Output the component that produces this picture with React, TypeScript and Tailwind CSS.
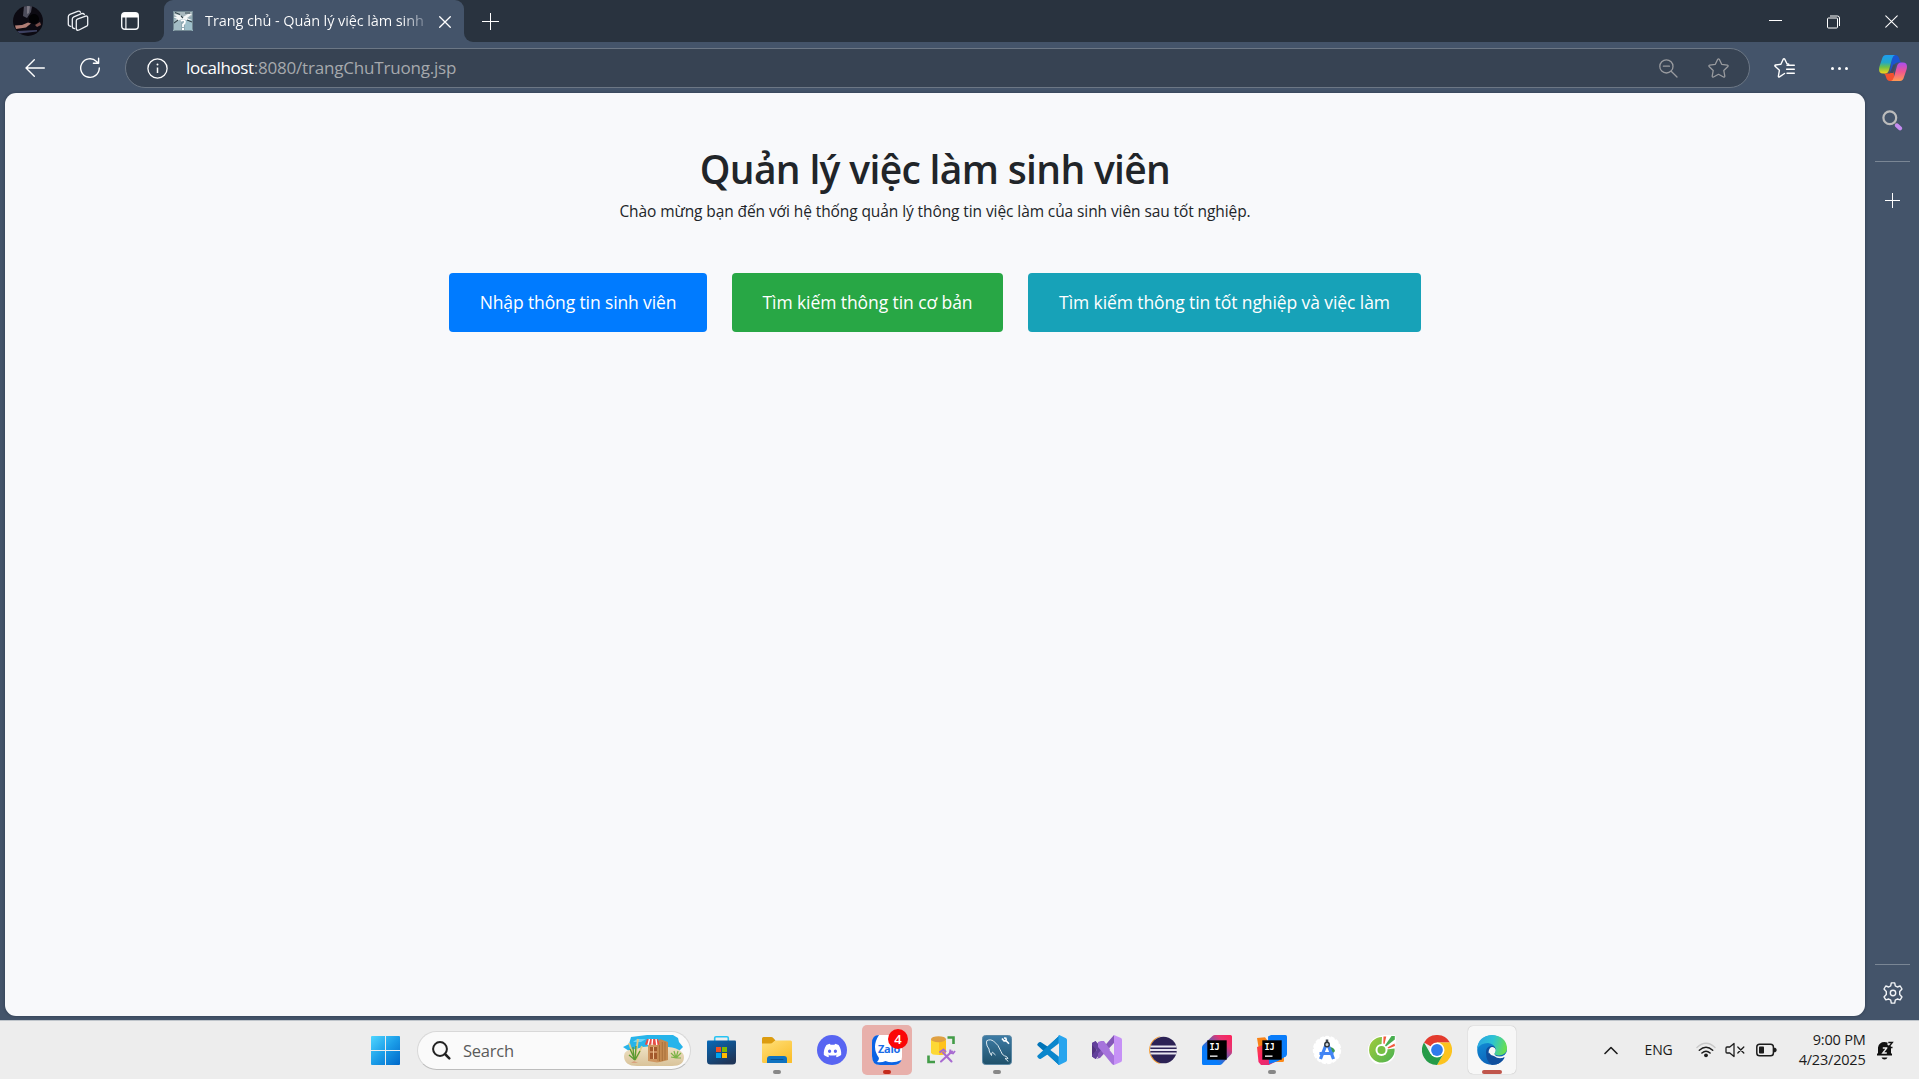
import React from "react";
import { FaDiscord } from "react-icons/fa";

const UI = "font-['Open_Sans','Noto_Sans',sans-serif]";

/* ---------- browser chrome icons ---------- */

function Avatar() {
  return (
    <svg width="30" height="30" viewBox="0 0 30 30">
      <defs>
        <clipPath id="av"><circle cx="15" cy="15" r="15" /></clipPath>
        <filter id="avs" x="-10%" y="-10%" width="120%" height="120%"><feGaussianBlur stdDeviation=".7" /></filter>
      </defs>
      <g clipPath="url(#av)">
        <rect width="30" height="30" fill="#0c0a12" />
        <g filter="url(#avs)">
          <path d="M11 0h8l-1 6-4 6-4-2z" fill="#4e4e5c" />
          <path d="M14 0h3l-1 7-2 1z" fill="#7b7984" />
          <path d="M2 19.500l7-.5 6-2.500 3 1-5 4-10 1.500z" fill="#b07d74" />
          <path d="M22 19l5-3 1 3-4 2z" fill="#7b504c" />
          <path d="M4 25l20-1v1.500l-18 2z" fill="#3c4060" />
        </g>
        <circle cx="21" cy="13" r="5" fill="#020204" />
      </g>
    </svg>
  );
}

function WorkspacesIcon() {
  return (
    <svg width="22" height="22" viewBox="0 0 22 22" fill="none" stroke="#eef1f5" strokeWidth="1.3" strokeLinejoin="round" strokeLinecap="round">
      <path d="M10.3 9.2 18.6 6.1Q20.7 5.6 20.7 7.5V14.4Q20.7 15.6 19.6 16.2L12 20Q9.4 20.9 9.3 18.6V10.8Q9.3 9.7 10.3 9.2Z" />
      <path d="M7.7 18.7Q5.3 18.6 5.3 16.6V9Q5.3 7.5 6.8 6.8L14.6 3.7Q16.7 3.1 17.3 4.6" />
      <path d="M3.7 16.3Q1.3 16 1.3 14V6.800Q1.300 5 2.900 4.300L10.600 1.300Q12.700 .8 13.500 2.200" />
    </svg>
  );
}

function TabActionsIcon() {
  return (
    <svg width="18" height="18" viewBox="0 0 18 18" fill="none">
      <rect x=".7" y=".7" width="16.600" height="16.600" rx="3" stroke="#f5f7f9" strokeWidth="1.400" />
      <path d="M1 5.500V3Q1 1 3 1h12q2 0 2 2v2.500z" fill="#fff" />
      <path d="M4.900 5v12" stroke="#f5f7f9" strokeWidth="1.200" />
    </svg>
  );
}

function Favicon() {
  return (
    <svg width="20" height="20" viewBox="0 0 20 20">
      <rect width="20" height="20" rx="1" fill="#8fa9b3" />
      <rect y="8" width="8" height="12" fill="#a3bcc4" />
      <rect x="12" y="9" width="8" height="11" fill="#9fc0cb" />
      <path d="M1 1h18v4l-6 3H7L1 6z" fill="#a9b9be" />
      <path d="M1 3l5 1 4 2 5-3 4 0-5 4 5 2-6 0-3-1-4 1-5 3 3-4-4-2 4 0z" fill="#f4f7f7" />
      <path d="M2 1.500l5 2M12 2l5 0M5 9l-4 3M14 9l5 2M8 5l2 2" stroke="#34454c" strokeWidth="1.100" />
      <path d="M8 10q3-2 4 .5 0 2-2 3v2.500" stroke="#fff" strokeWidth="1.800" fill="none" />
      <rect x="9" y="17" width="2" height="2" fill="#fff" />
      <rect x=".5" y=".5" width="19" height="19" rx="1" fill="none" stroke="#728892" />
    </svg>
  );
}

function Cross({ size, width }: { size: number; width: number }) {
  return (
    <svg width={size} height={size} viewBox="0 0 12 12" stroke="#fff" strokeWidth={width} strokeLinecap="round">
      <path d="M.7.7l10.600 10.600M11.300.7L.7 11.300" />
    </svg>
  );
}

function Plus({ size }: { size: number }) {
  const c = size / 2;
  return (
    <svg width={size} height={size} stroke="#fff" strokeWidth="1">
      <path d={`M${c} 0V${size}M0 ${c}H${size}`} />
    </svg>
  );
}

function BackIcon() {
  return (
    <svg width="20" height="18" viewBox="0 0 20 18" fill="none" stroke="#fff" strokeWidth="1.400" strokeLinecap="round" strokeLinejoin="round">
      <path d="M9.300.8L1 9l8.300 8.200M1 9h18.300" />
    </svg>
  );
}

function ReloadIcon() {
  return (
    <svg width="22" height="22" viewBox="0 0 22 22" fill="none" stroke="#fff" strokeWidth="1.400" strokeLinecap="round" strokeLinejoin="round">
      <path d="M20.300 11a9.300 9.300 0 1 1-2.800-6.600l1.600 1.700M19.600 1.300v5h-5.200" />
    </svg>
  );
}

function InfoIcon() {
  return (
    <svg width="21" height="21" viewBox="0 0 21 21" fill="none" stroke="#fff" strokeWidth="1.300">
      <circle cx="10.500" cy="10.500" r="9.600" />
      <path d="M10.500 9.500v5.500" strokeWidth="1.500" />
      <circle cx="10.500" cy="6.600" r="1" fill="#fff" stroke="none" />
    </svg>
  );
}

function ZoomOutIcon() {
  return (
    <svg width="19" height="19" viewBox="0 0 19 19" fill="none" stroke="#999b9f" strokeWidth="1.300" strokeLinecap="round">
      <circle cx="7.400" cy="7.400" r="6.600" />
      <path d="M12.200 12.200L18 18M4.400 7.200h6" />
    </svg>
  );
}

function StarIcon() {
  return (
    <svg width="21" height="20" viewBox="0 0 21 20" fill="none" stroke="#999b9f" strokeWidth="1.300" strokeLinejoin="round">
      <path d="M9.700 1.300q.8-1 1.600 0l2.400 5 5.700.8q1.200.4.500 1.400l-4.100 4 1 5.700q-.1 1.300-1.300.8L10.500 16.300 5.500 19q-1.200.5-1.300-.8l1-5.700-4.100-4q-.7-1 .5-1.400l5.700-.8z" />
    </svg>
  );
}

function FavoritesIcon() {
  return (
    <svg width="21" height="20" viewBox="0 0 21 20" fill="none" stroke="#fff" strokeWidth="1.400" strokeLinejoin="round" strokeLinecap="round">
      <path d="M10.500 15.500L5.500 18.800q-1.200.5-1.100-.8l1-5.700-4.300-4q-.7-1 .5-1.300l5.300-.8 2.300-5q.8-1 1.600 0l2.200 4.600 1.800.4" />
      <path d="M13 7.200h7.300M12.600 11.200h7.700M13 15.200h7.300" />
    </svg>
  );
}

function CopilotIcon() {
  return (
    <svg width="28" height="26" viewBox="0 0 28 26">
      <defs>
        <linearGradient id="cp1" x1="0" y1="0" x2="0" y2="1">
          <stop offset="0" stopColor="#1e9cf0" /><stop offset=".4" stopColor="#22a7c9" /><stop offset=".65" stopColor="#6cc04a" /><stop offset="1" stopColor="#f7d219" />
        </linearGradient>
        <linearGradient id="cp2" x1="0" y1="0" x2="0" y2="1">
          <stop offset="0" stopColor="#a94df0" /><stop offset=".5" stopColor="#f0568f" /><stop offset="1" stopColor="#ff9a52" />
        </linearGradient>
      </defs>
      <path d="M13 0h3q3 0 4 3l1 3q.6 1.500 3 1.500h-5q-3 0-4 3l-4 6z" fill="#1b55d0" />
      <path d="M6 18.500h5l3-4 2 10.500q-2 1.500-5 1-3 0-4-4-.5-2.500-2-3.500z" fill="#f4512e" />
      <path d="M7 0h9q-2 .6-3 4l-3 11q-1 3.500-4 3.500H4Q-1 18.500.3 12L3 4Q4 0 7 0z" fill="url(#cp1)" />
      <path d="M21 26h-9q2-.6 3-4l3-11q1-3.500 4-3.500h2q5 0 3.700 6.500L25 22q-1 4-4 4z" fill="url(#cp2)" />
      <path d="M14.200 9.500h2.600l-2.600 8.500h-3.200z" fill="#3f4a63" />
    </svg>
  );
}

function SideSearchIcon() {
  return (
    <svg width="21" height="21" viewBox="0 0 21 21" fill="none">
      <path d="M12.500 12.500l3 3" stroke="#777" strokeWidth="2" />
      <circle cx="7.800" cy="7.800" r="6.400" stroke="#bcbcbc" strokeWidth="2.200" />
      <path d="M15 15.500l3 2.800" stroke="#c58bf0" strokeWidth="4.200" strokeLinecap="round" />
    </svg>
  );
}

function GearIcon() {
  return (
    <svg width="22" height="22" viewBox="0 0 22 22" fill="none" stroke="#f1f3f6" strokeWidth="1.400" strokeLinejoin="round">
      <path d="M9.300.9h3.400l.6 3 2 1.100 2.900-1 1.800 3-2.300 2.500v3l2.300 2.400-1.800 3-2.900-.9-2 1.100-.6 3H9.300l-.6-3-2-1.100-2.900.9-1.800-3 2.300-2.400v-3L2 7l1.800-3 2.900 1 2-1.100z" />
      <circle cx="11" cy="11" r="2.700" />
    </svg>
  );
}

/* ---------- taskbar icons ---------- */

function WindowsIcon() {
  return (
    <svg width="29" height="29" viewBox="0 0 29 29">
      <defs>
        <linearGradient id="win" gradientUnits="userSpaceOnUse" x1="0" y1="0" x2="29" y2="29">
          <stop offset="0" stopColor="#4fd6ff" /><stop offset=".5" stopColor="#1b9de8" /><stop offset="1" stopColor="#0067c8" />
        </linearGradient>
      </defs>
      <path fill="url(#win)" d="M1 0h13v14H0V1q0-1 1-1zM15 0h13q1 0 1 1v13H15zM0 15h14v14H1q-1 0-1-1zM15 15h14v13q0 1-1 1H15z" />
    </svg>
  );
}

function SearchIcon() {
  return (
    <svg width="19" height="19" viewBox="0 0 19 19" fill="none" stroke="#222" strokeWidth="2" strokeLinecap="round">
      <circle cx="8" cy="8" r="6.900" />
      <path d="M13 13l4.300 4.300" strokeWidth="2.500" />
    </svg>
  );
}

function BeachPicture() {
  return (
    <svg width="61" height="33" viewBox="0 0 61 33">
      <defs>
        <linearGradient id="sand" x1="0" y1="0" x2="0" y2="1">
          <stop offset="0" stopColor="#efe2c4" /><stop offset="1" stopColor="#d9c39a" />
        </linearGradient>
      </defs>
      <path d="M8 3L24 1 50 1 55 4 56 8 60 13 56 17H6L0 13 6 10z" fill="#27b4ea" />
      <path d="M14 5h9l-5 3h-8z" fill="#6fd4f5" />
      <path d="M1 22q0-7 12-7 10-4 22-2 14-1 21 3 5 3 5 7 0 9-12 9H14Q1 32 1 22z" fill="url(#sand)" />
      <path d="M25 10h10l2-4v22l-3 .5-9-1.500z" fill="#cf9660" />
      <path d="M34 9l3-4 8 3v18l-8 2-3-1z" fill="#c48a50" />
      <path d="M36.500 11v16M39.300 8v19M42 8v18" stroke="#9c6430" strokeWidth=".7" />
      <rect x="27" y="13" width="7" height="12" fill="#a3592c" />
      <path d="M30.500 13v12M27 18h7" stroke="#f0c391" strokeWidth="1" />
      <path d="M24 5h11l1.500 5q-1.500 2-3 0-1.500 2-3 0-1.500 2-3 0-1.500 2-3 0-1.500 2-2.500 0z" fill="#e84b45" />
      <path d="M26.500 5l-1.500 6M29.500 5l-.5 6M33 5l.8 6" stroke="#fff" strokeWidth="1.400" />
      <path d="M12 26L15 5M12 26l-6-17M13 26l6-14" stroke="#e0ca86" strokeWidth="1.800" />
      <path d="M12 26l-5-11M12 26l1-14M12 26l5-9M12 26l-6-5M11 26l-1-13" stroke="#5b9a31" strokeWidth="1.300" />
      <path d="M53 24l-5-5M53 24l-2-7M53 24l2-7M53 24l5-5M53 24l-5-1M53 24h5" stroke="#7bb346" strokeWidth="1.200" />
      <path d="M8 29l3-2 4 2z" fill="#d9a27e" />
    </svg>
  );
}

function StoreIcon() {
  return (
    <svg width="30" height="30" viewBox="0 0 30 30">
      <defs>
        <linearGradient id="st" x1="0" y1="0" x2=".6" y2="1">
          <stop offset="0" stopColor="#0669b8" /><stop offset="1" stopColor="#1f3659" />
        </linearGradient>
      </defs>
      <path d="M7.700 6V3q0-1.300 1.300-1.300h11q1.300 0 1.300 1.300v3" fill="none" stroke="#27c3f3" strokeWidth="1.600" />
      <path d="M1 5.500h27q1 0 1 1V26q0 3.500-3.500 3.500h-22Q0 29.500 0 26V6.500q0-1 1-1z" fill="url(#st)" />
      <rect x="9" y="12" width="5" height="5" fill="#f25022" />
      <rect x="15" y="12" width="5" height="5" fill="#7fba00" />
      <rect x="9" y="18" width="5" height="5" fill="#00a4ef" />
      <rect x="15" y="18" width="5" height="5" fill="#ffb900" />
    </svg>
  );
}

function ExplorerIcon() {
  return (
    <svg width="30" height="30" viewBox="0 0 30 30">
      <defs>
        <linearGradient id="fo" x1="0" y1="0" x2=".7" y2="1">
          <stop offset="0" stopColor="#ffe07a" /><stop offset="1" stopColor="#fbbf2d" />
        </linearGradient>
      </defs>
      <path d="M0 3.500Q0 2 1.500 2H9q1.500 0 2.500 1.200L13.500 5.500 10 9H0z" fill="#dc9c10" />
      <path d="M0 8.500h8q2 0 3-1.200 1.300-1.800 3-1.800h14.500q1.500 0 1.500 1.500v20.500q0 .5-.5.5H1.500Q0 28 0 26.500z" fill="url(#fo)" />
      <path d="M5 28v-4q0-3 3-3h14q3 0 3 3v4z" fill="#0f72c0" />
      <path d="M9 24.500h12" stroke="#0b5190" strokeWidth="1.200" strokeLinecap="round" />
    </svg>
  );
}

function DiscordIcon() {
  return (
    <span className="flex size-[30px] items-center justify-center rounded-full bg-[#5865f2]">
      <FaDiscord size={19} color="#fff" />
    </span>
  );
}

function ZaloIcon() {
  return (
    <span className="relative block size-[30px]">
      <svg width="30" height="30" viewBox="0 0 30 30">
        <rect width="30" height="30" rx="8" fill="#fff" />
        <path d="M7 0Q0 0 0 8v13q0 9 8 9h13q7 0 8.500-5-9 4-16 1-4 2-8.500 1 2-1.500 2-4Q-1 12 7 0z" fill="#0b63e5" />
      </svg>
      <span className="absolute left-[6px] top-[7px] font-['Open_Sans',sans-serif] text-[11px] leading-[14px] font-bold tracking-[-0.3px] text-[#1a6ce8]">Zalo</span>
      <span className="absolute left-[16px] top-[-6px] flex size-5 items-center justify-center rounded-full bg-[#fb0606] font-['Open_Sans',sans-serif] text-[13px] leading-none font-semibold text-white">4</span>
    </span>
  );
}

function SqlToolsIcon() {
  return (
    <svg width="30" height="30" viewBox="0 0 30 30" fill="none">
      <path d="M20.500 2.500h6V9M1.500 20.500v6.500H8" stroke="#439c48" strokeWidth="2.600" />
      <path d="M4 4.500v13q0 2.500 7.500 2.500t7.500-2.500v-13z" fill="#fdd835" />
      <path d="M12 6h7v11q0 2-5 3h-2z" fill="#ffc21c" />
      <ellipse cx="11.500" cy="4.200" rx="7.500" ry="3" fill="#dfa042" />
      <path d="M14 26.500l11-10M24.500 26.500l-8.500-9" stroke="#a86bd1" strokeWidth="2.100" strokeLinecap="round" />
      <path d="M12.500 17.500l4-3 2.500 2.500M23.500 14.500l-.5 3 3 1 2-2.500" stroke="#a86bd1" strokeWidth="1.900" />
    </svg>
  );
}

function MySqlIcon() {
  return (
    <svg width="30" height="30" viewBox="0 0 30 30" fill="none">
      <defs>
        <linearGradient id="my" x1="0" y1="0" x2="0" y2="1">
          <stop offset="0" stopColor="#3e7ca6" /><stop offset="1" stopColor="#1f5069" />
        </linearGradient>
      </defs>
      <rect x=".5" y=".5" width="29" height="29" rx="3" fill="url(#my)" stroke="#5c88a4" />
      <path d="M9.500 20.500L8 18Q7 16 7 14 4.500 11 4.500 8 4 5 6.500 5q2-.8 5 1Q16.500 9.500 19 16.500q1 3.500 3.500 4.300 2.500.2 3.500 2.700-2-.5-3 0 2 1 3 3M9.500 20.500q0-3 1-3.300l3 2.800" stroke="#dbe8ef" strokeWidth="1" strokeLinejoin="round" />
      <path d="M20 3.500l2 2.500 2-.3 3 3M22 3l1.800.3.500 2" stroke="#fff" strokeWidth="1.600" />
    </svg>
  );
}

function VsCodeIcon() {
  return (
    <svg width="30" height="30" viewBox="0 0 30 30">
      <path d="M22 1L10.500 11.500 3.600 6.900 2 7.300.4 9Q0 9.800.6 10.500L22 30z" fill="#0074b8" />
      <path d="M22 30L10.500 19.500 3.600 24.100 2 23.700.4 22q-.4-.8.200-1.500L22 1z" fill="#0a86cc" />
      <path d="M22.300 0L29 3.200q1 .6 1 1.800v20q0 1.200-1 1.800L22.300 30q-1 0-.8-1V1q-.2-1 .8-1z" fill="#28a5ee" />
      <path d="M22 8.200L13.300 15 22 21.800z" fill="#ededed" />
    </svg>
  );
}

function VisualStudioIcon() {
  return (
    <svg width="30" height="30" viewBox="0 0 30 30">
      <path d="M0 8l4-1.800V24L0 21.500z" fill="#52327f" />
      <path d="M0 8l3.500-2L12 15l-8.500 9L0 21.500V20l4.500-5L0 10z" fill="#62409b" />
      <path d="M22 0L6 18.500v4L3.500 24 8 23 22 8z" fill="#8356b8" />
      <path d="M9 6h3l10 14v10q-1 0-2-1L6 12V7z" fill="#a673dc" />
      <path d="M22 0l7 3q1 .5 1 2v20q0 1.500-1 2l-7 3z" fill="#c691f6" />
      <path d="M22 9.500v11L17.500 15z" fill="#ededed" />
    </svg>
  );
}

function EclipseIcon() {
  return (
    <svg width="30" height="30" viewBox="0 0 30 30">
      <path d="M14 1A14.200 14.200 0 0 0 14 29Q3 24 3 15T14 1z" fill="#f7941e" />
      <circle cx="16.500" cy="15" r="13.300" fill="#2c2255" />
      <path d="M3.400 11.500h26.200M3 15h27M3.400 18.500h26.200" stroke="#e8e6f0" strokeWidth="1.800" />
    </svg>
  );
}

function IntellijIcon({ alt = false }: { alt?: boolean }) {
  return (
    <svg width="30" height="30" viewBox="0 0 30 30">
      <defs>
        <linearGradient id="ij" x1="1" y1="0" x2="0" y2="1">
          <stop offset="0" stopColor="#ff2259" /><stop offset=".25" stopColor="#e63573" /><stop offset=".5" stopColor="#5560b4" /><stop offset=".7" stopColor="#087cfa" />
        </linearGradient>
        <linearGradient id="ij2" x1="0" y1="0" x2=".6" y2="1">
          <stop offset="0" stopColor="#fb4a35" /><stop offset=".5" stopColor="#ff2464" /><stop offset="1" stopColor="#e02d74" />
        </linearGradient>
      </defs>
      {alt ? (
        <>
          <path d="M0 3l8-.8 3 4V27H4z" fill="#f88216" />
          <path d="M20 20h7v5.500q0 1.500-1.500 1.500H17z" fill="#fc8a1a" />
          <path d="M0 12l6-2 14 16-8 4H4L1.500 27z" fill="url(#ij2)" />
          <path d="M11 1.500L14 0h14.500Q30 0 30 1.500V19q0 1.500-1 2.200L21 26l-9 3z" fill="#0a7dfa" />
        </>
      ) : (
        <path d="M10.500 1Q11.500 0 13 0h15.500Q30 0 30 1.500V17q0 1.500-1 2.500L20 29q-1 1-2.500 1h-16Q0 30 0 28.500V12.500Q0 11 1 10z" fill="url(#ij)" />
      )}
      <rect x="5.300" y="5.300" width="19.400" height="19.400" fill="#000" />
      <text x="7.500" y="15" fill="#fff" fontFamily="DejaVu Sans Mono" fontWeight="bold" fontSize="8.500">IJ</text>
      <rect x="8" y="20.500" width="7.500" height="1.300" fill="#fff" />
    </svg>
  );
}

function AndroidStudioIcon() {
  return (
    <svg width="30" height="30" viewBox="0 0 30 30" fill="none">
      <circle cx="15" cy="15" r="13.300" fill="#fff" stroke="#fff" strokeWidth="1.800" strokeDasharray="4 1.500" />
      <path d="M17 12q5 0 6 4-1 2-3 2z" fill="#3d9950" />
      <path d="M14.500 8.500L8.500 24M15.500 8.500l6 15.500M7.500 18.500h14" stroke="#4285f4" strokeWidth="3.200" />
      <path d="M15 4.500v4" stroke="#444b52" strokeWidth="2.500" />
      <circle cx="15" cy="9.500" r="2.200" fill="#cfd6dc" stroke="#30363b" strokeWidth="1.400" />
    </svg>
  );
}

function CocCocIcon() {
  return (
    <svg width="30" height="30" viewBox="0 0 30 30" fill="none">
      <defs>
        <linearGradient id="cc" x1="0" y1=".3" x2="1" y2="1">
          <stop offset="0" stopColor="#96c83e" /><stop offset="1" stopColor="#4bb251" />
        </linearGradient>
      </defs>
      <path d="M17 0l11 0 1 4-1 9q2 14-12 16H9Q0 24 1 12 5 1 17 0z" fill="#fff" />
      <path d="M15 2A12.800 12.800 0 1 0 27.600 13.500L19 14.500a4.600 4.600 0 1 1-4.500-4.700z" fill="url(#cc)" />
      <circle cx="14.500" cy="15" r="6" fill="#fff" />
      <circle cx="14.500" cy="15" r="4" fill="#75c043" />
      <path d="M16.500 1.500h2.800l-1.800 7.500-1.200-.5zM20.500 12.500l7-4 .5 2.500-6.500 2.500z" fill="#f15b3f" />
      <path d="M24.500 1l3.300 0v3.500l-8.800 7-1-1z" fill="#48ae50" />
    </svg>
  );
}

function ChromeIcon() {
  return (
    <svg width="30" height="30" viewBox="0 0 30 30">
      <path d="M15 15L2 7.500A15 15 0 0 1 28 7.500H15z" fill="#e33b2e" />
      <path d="M15 15L15 7.500H28A15 15 0 0 1 15 30L21.500 18.700z" fill="#fcc31e" />
      <path d="M8.500 18.700L2 7.500A15 15 0 0 0 15 30L21.500 18.700 15 15z" fill="#259b48" />
      <circle cx="15" cy="15" r="7.500" fill="#fff" />
      <circle cx="15" cy="15" r="5.900" fill="#2f7bea" />
    </svg>
  );
}

function EdgeIcon() {
  return (
    <svg width="30" height="30" viewBox="0 0 30 30">
      <defs>
        <linearGradient id="ed1" x1="0" y1=".3" x2="1" y2=".5">
          <stop offset="0" stopColor="#2ba5e2" /><stop offset=".5" stopColor="#2cc3d4" /><stop offset="1" stopColor="#6ae04c" />
        </linearGradient>
        <linearGradient id="ed2" x1="0" y1="0" x2=".4" y2="1">
          <stop offset="0" stopColor="#1396dc" /><stop offset="1" stopColor="#0c62b8" />
        </linearGradient>
      </defs>
      <circle cx="15" cy="15" r="14.800" fill="url(#ed2)" />
      <path d="M9 17Q9 12 14 11q6-1 5.500 6l-2 4q5 4 10.500.5Q24 30 15 30 9 27 9 17z" fill="#104f9d" />
      <path d="M11.500 17.500Q12 12 15.500 12q3.500.5 3.300 4-.1 1.500-1.300 3 .5 2.500 5 2.500 2.500 0 5-1.500l3-4V24l-3.500-1.500q-5 2.500-9.500 1-5-2-6-6z" fill="#f7f7f7" />
      <path d="M17 21q5 4 10.500 1.200-3 5.300-8 7-6-2-8-7-.5-3 .2-5Q13 20 17 21z" fill="#104f9d" />
      <path d="M0 14Q1 1 15 0q14 1 15 13 0 7-8 7.500-5-.3-4.500-2 1.800-2 1.300-4.500Q17.500 9 11 8 3.500 8 0 14z" fill="url(#ed1)" />
    </svg>
  );
}

function WifiIcon() {
  return (
    <svg width="20" height="16" viewBox="0 0 20 16" fill="none" strokeLinecap="round">
      <path d="M1 5.500q9-8.500 18 0" stroke="#c9c9c9" strokeWidth="1.400" />
      <path d="M3.300 8.300q6.700-6 13.400 0M5.900 11q4.100-3.600 8.200 0" stroke="#1d1d1d" strokeWidth="1.500" />
      <circle cx="10" cy="13.300" r="1.900" fill="#1d1d1d" />
    </svg>
  );
}

function MutedIcon() {
  return (
    <svg width="20" height="16" viewBox="0 0 20 16" fill="none" stroke="#1d1d1d" strokeWidth="1.300" strokeLinejoin="round" strokeLinecap="round">
      <path d="M9 1.500v13L4.800 11H2q-1 0-1-1V6q0-1 1-1h2.800z" />
      <path d="M12.800 5l6 6M18.800 5l-6 6" />
    </svg>
  );
}

function BatteryIcon() {
  return (
    <svg width="21" height="14" viewBox="0 0 21 14" fill="none">
      <rect x=".8" y="1.300" width="16.600" height="11.400" rx="2.800" stroke="#1d1d1d" strokeWidth="1.500" />
      <rect x="3" y="3.500" width="5" height="7" rx=".8" fill="#1d1d1d" />
      <path d="M18.500 5q1.700 0 1.700 2t-1.700 2z" fill="#1d1d1d" stroke="#1d1d1d" />
    </svg>
  );
}

function BellIcon() {
  return (
    <svg width="18" height="21" viewBox="0 0 18 21">
      <path d="M1 15.500V14l1-1V7.500Q3 2 8.500 2 15 2 15 8v5l1 1v1.500z" fill="#111" />
      <path d="M5.500 17.500h6q-.8 2-3 2t-3-2z" fill="#111" />
      <path d="M6.800 8h4l-4 5h4" stroke="#ededed" strokeWidth="1.400" fill="none" />
      <path d="M11.500 5V0H18v6h-4z" fill="#ededed" />
      <path d="M12.300 2.500h4l-4 5h4.200" stroke="#111" strokeWidth="1.400" fill="none" />
    </svg>
  );
}

/* ---------- browser chrome ---------- */

function TabStrip() {
  return (
    <header className="flex h-[42px] bg-[#29333f]">
      <div className="flex w-[154px] items-center pl-[13px]">
        <Avatar />
        <div className="ml-[23.5px]"><WorkspacesIcon /></div>
        <div className="ml-[32.5px]"><TabActionsIcon /></div>
      </div>
      <div className="w-[10px] bg-[#44546a]"><div className="h-full rounded-br-[9px] bg-[#29333f]" /></div>
      <div className="flex w-[300px] items-center rounded-t-[9px] bg-[#44546a] pl-[9px]">
        <Favicon />
        <div className="ml-[12px] w-[219px] overflow-hidden whitespace-nowrap bg-gradient-to-r from-white from-[90%] to-[#7b8798] bg-clip-text text-[14.500px] leading-[22px] tracking-[-0.1px] text-transparent">
          Trang chủ - Quản lý việc làm sinh
        </div>
        <div className="ml-[14.5px] pt-px"><Cross size={12} width={1.300} /></div>
      </div>
      <div className="w-[10px] bg-[#44546a]"><div className="h-full rounded-bl-[9px] bg-[#29333f]" /></div>
      <div className="ml-[8px] flex items-center"><Plus size={17} /></div>
      <div className="ml-auto mr-[21px] flex items-center gap-[45px]">
        <div className="mb-px h-px w-[13px] bg-white" />
        <svg width="13" height="14" viewBox="0 0 13 14" fill="none" stroke="#fff" className="mt-px">
          <rect x=".5" y="3" width="10" height="10" rx="1" />
          <path d="M3 1h7.500q2 0 2 2v8" />
        </svg>
        <Cross size={13} width={1} />
      </div>
    </header>
  );
}

function Toolbar() {
  return (
    <div className="flex h-[51px] items-center pt-[1px] pr-[12px]">
      <div className="ml-[25px]"><BackIcon /></div>
      <div className="ml-[34px]"><ReloadIcon /></div>
      <div className="ml-[24px] flex h-[40px] w-[1625px] items-center rounded-full border border-[#6c7785] bg-[#374353] pr-[20px] pl-[21px]">
        <InfoIcon />
        <div className="ml-[18px] whitespace-nowrap text-[17px] leading-6 tracking-[-0.19px] text-[#a6a9ad]">
          <span className="tracking-[-0.4px] text-white">localhost</span>:8080/trangChuTruong.jsp
        </div>
        <div className="ml-auto"><ZoomOutIcon /></div>
        <div className="ml-[30px]"><StarIcon /></div>
      </div>
      <div className="ml-[24px]"><FavoritesIcon /></div>
      <div className="ml-[36px] flex gap-[4px]">
        <i className="size-[3px] rounded-full bg-white" />
        <i className="size-[3px] rounded-full bg-white" />
        <i className="size-[3px] rounded-full bg-white" />
      </div>
      <div className="ml-auto"><CopilotIcon /></div>
    </div>
  );
}

function Page() {
  const button = "flex h-[59px] items-center justify-center whitespace-nowrap rounded-[4px] text-[17.500px] text-white";
  return (
    <main className="ml-[5px] flex h-[923px] w-[1860px] flex-col items-center rounded-[11px] bg-[#f8f9fb] pt-[52px] text-[#212529] shadow-[0_0_3px_rgba(20,30,45,0.5)]">
      <h1 className="h-12 whitespace-nowrap text-[39px] leading-[48px] font-semibold tracking-[-0.67px]">Quản lý việc làm sinh viên</h1>
      <p className="mt-[6px] h-6 whitespace-nowrap text-[15.500px] leading-6 tracking-[-0.09px]">
        Chào mừng bạn đến với hệ thống quản lý thông tin việc làm của sinh viên sau tốt nghiệp.
      </p>
      <div className="mt-[50px] flex gap-[25px]">
        <button className={`${button} w-[258px] bg-[#007bff] tracking-[-0.12px]`}>Nhập thông tin sinh viên</button>
        <button className={`${button} w-[271px] bg-[#28a745] tracking-[-0.08px]`}>Tìm kiếm thông tin cơ bản</button>
        <button className={`${button} w-[393px] bg-[#17a2b8] tracking-[-0.09px]`}>Tìm kiếm thông tin tốt nghiệp và việc làm</button>
      </div>
    </main>
  );
}

function SideBar() {
  return (
    <aside className="flex h-[923px] flex-1 flex-col items-center pl-[1px]">
      <div className="mt-[17px] mr-px"><SideSearchIcon /></div>
      <div className="mt-[30px] h-px w-[35px] bg-[#7a8695]" />
      <div className="mt-[31px]"><Plus size={15} /></div>
      <div className="mt-auto h-px w-[35px] bg-[#7a8695]" />
      <div className="mt-[17px] mb-[12px]"><GearIcon /></div>
    </aside>
  );
}

/* ---------- taskbar ---------- */

type AppState = "alert" | "active";

const apps: { id: string; icon: React.ReactNode; running?: boolean; state?: AppState }[] = [
  { id: "store", icon: <StoreIcon /> },
  { id: "explorer", icon: <ExplorerIcon />, running: true },
  { id: "discord", icon: <DiscordIcon /> },
  { id: "zalo", icon: <ZaloIcon />, state: "alert" },
  { id: "sql", icon: <SqlToolsIcon /> },
  { id: "mysql", icon: <MySqlIcon />, running: true },
  { id: "vscode", icon: <VsCodeIcon /> },
  { id: "vs", icon: <VisualStudioIcon /> },
  { id: "eclipse", icon: <EclipseIcon /> },
  { id: "idea", icon: <IntellijIcon /> },
  { id: "idea-ce", icon: <IntellijIcon alt />, running: true },
  { id: "android", icon: <AndroidStudioIcon /> },
  { id: "coccoc", icon: <CocCocIcon /> },
  { id: "chrome", icon: <ChromeIcon /> },
  { id: "edge", icon: <EdgeIcon />, state: "active" },
];

function AppSlot({ icon, running, state }: { icon: React.ReactNode; running?: boolean; state?: AppState }) {
  const box =
    state === "active"
      ? "mx-[3.5px] mt-px h-[48px] w-[48px] pt-[9px] bg-[#f7f7f7] shadow-[0_0_1px_rgba(0,0,0,0.35)]"
      : state === "alert"
        ? "mx-[2.5px] h-[50px] w-[50px] pt-[10px] bg-[#e8b0ab]"
        : "mx-[2.5px] h-[50px] w-[50px] pt-[10px]";
  const mark =
    state === "alert" ? "w-2 bg-[#c42b1c]" : state === "active" ? "w-5 bg-[#c0564c]" : running ? "w-2 bg-[#878787]" : "w-2";
  return (
    <div className={`flex flex-col items-center rounded-[5px] ${box}`}>
      {icon}
      <div className={`mt-[5px] h-1 rounded-full ${mark}`} />
    </div>
  );
}

function Taskbar() {
  return (
    <footer className="flex h-[59px] items-center border-t border-[#bfc5cb] bg-[#ededed] text-[#1b1b1b]">
      <div className="ml-[371px]"><WindowsIcon /></div>
      <div className="ml-[17px] flex h-[39px] w-[274px] items-center rounded-full border border-[#d8d8d8] border-b-[#bdbdbd] bg-[#fafafa] pr-[6px] pl-[14px]">
        <SearchIcon />
        <span className="ml-[12px] pt-px text-[16.500px] leading-6 tracking-[-0.25px] text-[#5a5a5a]">Search</span>
        <div className="ml-auto"><BeachPicture /></div>
      </div>
      <div className="ml-[3.500px] flex">
        {apps.map(({ id, ...app }) => (
          <AppSlot key={id} {...app} />
        ))}
      </div>
      <svg width="14" height="9" viewBox="0 0 14 9" fill="none" stroke="#1d1d1d" strokeWidth="1.600" strokeLinecap="round" strokeLinejoin="round" className="ml-[84px]">
        <path d="M1 7.500l6-6 6 6" />
      </svg>
      <span className="ml-[27px] w-[30px] text-[14px] leading-5 tracking-[-0.1px]">ENG</span>
      <div className="ml-[21px]"><WifiIcon /></div>
      <div className="ml-[9px]"><MutedIcon /></div>
      <div className="ml-[11px]"><BatteryIcon /></div>
      <div className="ml-[10px] flex w-[79px] flex-col items-end text-[14.500px] leading-5 tracking-[-0.2px] whitespace-nowrap">
        <span>9:00 PM</span>
        <span>4/23/2025</span>
      </div>
      <div className="ml-[10px]"><BellIcon /></div>
    </footer>
  );
}

export default function App() {
  return (
    <div className={`h-[1079px] w-[1919px] overflow-hidden bg-[#44546a] ${UI}`}>
      <TabStrip />
      <Toolbar />
      <div className="flex h-[927px]">
        <Page />
        <SideBar />
      </div>
      <Taskbar />
    </div>
  );
}
